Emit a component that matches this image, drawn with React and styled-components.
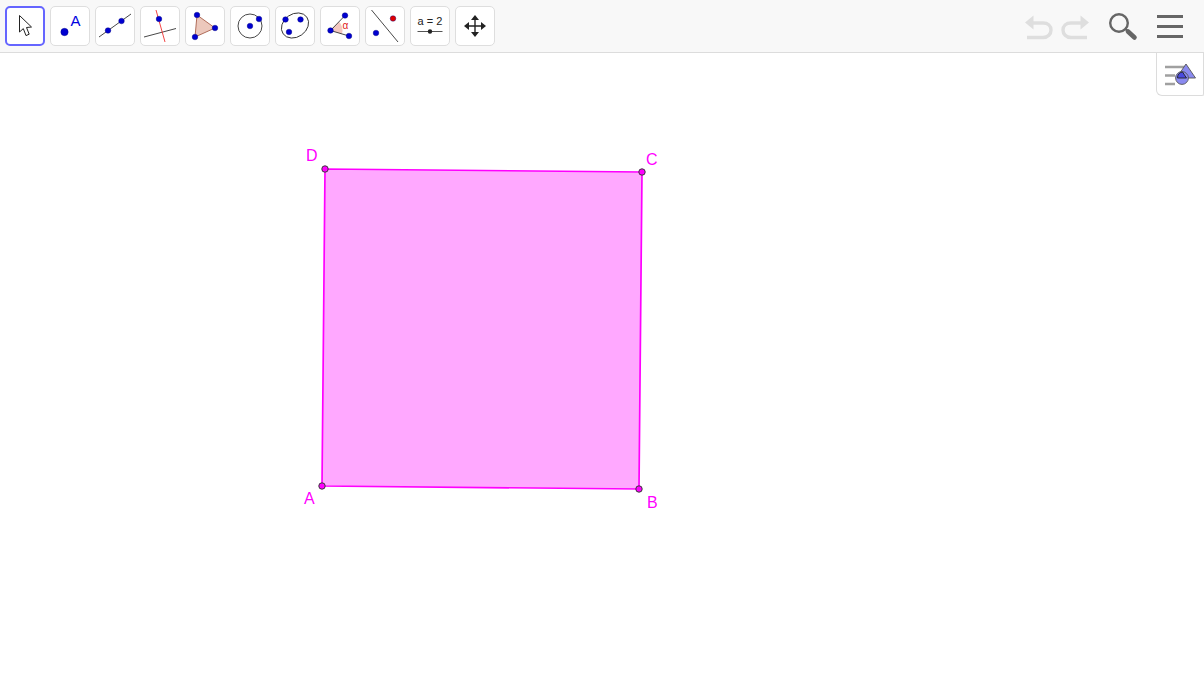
import React from 'react';
import styled, { createGlobalStyle } from 'styled-components';

const BLUE = '#0000d0';

const GlobalStyle = createGlobalStyle`
	html,
	body {
		margin: 0;
		padding: 0;
		height: 100%;
		background: #fff;
		font-family: 'Liberation Sans', Arial, sans-serif;
	}
`;

function Dot({ x, y, r = 2.8, color = BLUE }) {
	return <circle cx={x} cy={y} r={r} fill={color} stroke="#00007a" strokeWidth="0.4" />;
}

function ToolLabel({ x, y, size, color, anchor = 'start', children }) {
	return (
		<text x={x} y={y} fontSize={size} fill={color} textAnchor={anchor} fontFamily="Liberation Sans, Arial, sans-serif">
			{children}
		</text>
	);
}

const tools = [
	{
		name: 'move',
		icon: (
			<path
				d="M14.5 9.5 L14.5 26 L18.3 22.6 L21 29.6 L24.2 28.2 L21.5 21.5 L26.5 21 Z"
				fill="#fff"
				stroke="#222"
				strokeWidth="1"
				strokeLinejoin="round"
			/>
		),
	},
	{
		name: 'point',
		icon: (
			<>
				<Dot x={14.5} y={26} r={3.7} />
				<ToolLabel x={20.5} y={19.5} size={15} color="#0000e0">A</ToolLabel>
			</>
		),
	},
	{
		name: 'line',
		icon: (
			<>
				<line x1="4" y1="31" x2="36" y2="8" stroke="#333" strokeWidth="0.9" />
				<Dot x={13} y={24.5} />
				<Dot x={26.5} y={15} />
			</>
		),
	},
	{
		name: 'perpendicular',
		icon: (
			<>
				<line x1="4" y1="31" x2="36" y2="22.5" stroke="#333" strokeWidth="0.9" />
				<line x1="16" y1="4" x2="25" y2="36" stroke="#f03030" strokeWidth="0.9" />
				<Dot x={19} y={13} />
			</>
		),
	},
	{
		name: 'polygon',
		icon: (
			<>
				<polygon points="12,9 30,22 10,31" fill="#ecc8bc" stroke="#a8604c" strokeWidth="0.9" />
				<Dot x={12} y={9} />
				<Dot x={30} y={22} />
				<Dot x={10} y={31} />
			</>
		),
	},
	{
		name: 'circle',
		icon: (
			<>
				<circle cx="20" cy="20" r="12" fill="none" stroke="#333" strokeWidth="0.9" />
				<Dot x={20} y={20} />
				<Dot x={29} y={13} />
			</>
		),
	},
	{
		name: 'ellipse',
		icon: (
			<>
				<ellipse cx="20" cy="19.5" rx="14.5" ry="11.5" transform="rotate(-35 20 19.5)" fill="none" stroke="#333" strokeWidth="0.9" />
				<Dot x={10.5} y={13.5} />
				<Dot x={25.5} y={13.5} />
				<Dot x={14} y={26} />
			</>
		),
	},
	{
		name: 'angle',
		icon: (
			<>
				<path d="M10.5 24.5 L19 15.8 A12 12 0 0 1 21.8 28 Z" fill="#f4c8c0" />
				<path d="M25 9.5 L10.5 24.5 L29 30" fill="none" stroke="#333" strokeWidth="0.9" />
				<ToolLabel x={22.5} y={23} size={10} color="#e02020">α</ToolLabel>
				<Dot x={10.5} y={24.5} />
				<Dot x={25} y={9.5} />
				<Dot x={29} y={30} />
			</>
		),
	},
	{
		name: 'reflect',
		icon: (
			<>
				<line x1="6.5" y1="4" x2="33" y2="36" stroke="#333" strokeWidth="0.9" />
				<Dot x={11} y={27} />
				<Dot x={28} y={12.5} color="#e00000" />
			</>
		),
	},
	{
		name: 'slider',
		icon: (
			<>
				<ToolLabel x={20} y={19} size={11} color="#222" anchor="middle">a = 2</ToolLabel>
				<line x1="7.5" y1="25.5" x2="32.5" y2="25.5" stroke="#555" strokeWidth="1" />
				<circle cx="20" cy="25.5" r="2.2" fill="#222" />
			</>
		),
	},
	{
		name: 'pan',
		icon: (
			<>
				<path d="M20 11 V29 M11 20 H29" stroke="#222" strokeWidth="1.4" />
				<path d="M20 9 L24 14 H16 Z M20 31 L24 26 H16 Z M9 20 L14 16 V24 Z M31 20 L26 16 V24 Z" fill="#222" />
			</>
		),
	},
];

function App() {
	return (
		<Page>
			<GlobalStyle />
			<Toolbar>
				<ToolGroup>
					{tools.map((tool, index) => (
						<ToolButton key={tool.name} $active={index === 0} type="button" aria-label={tool.name}>
							<svg viewBox="0 0 40 40" width="40" height="40">
								{tool.icon}
							</svg>
						</ToolButton>
					))}
				</ToolGroup>
				<Actions>
					<svg width="30" height="26" viewBox="0 0 30 26">
						<path d="M8 8 H19 C24 8 27 11 27 15 C27 19 24 22.5 19 22.5 H3" fill="none" stroke="#dedede" strokeWidth="3.4" />
						<path d="M1 7.5 L9.5 0.5 V14.5 Z" fill="#dedede" />
					</svg>
					<RedoIcon width="30" height="26" viewBox="0 0 30 26">
						<path d="M8 8 H19 C24 8 27 11 27 15 C27 19 24 22.5 19 22.5 H3" fill="none" stroke="#dedede" strokeWidth="3.4" />
						<path d="M1 7.5 L9.5 0.5 V14.5 Z" fill="#dedede" />
					</RedoIcon>
					<SearchIcon width="32" height="30" viewBox="0 0 32 30">
						<circle cx="12" cy="11" r="8.8" fill="none" stroke="#666" strokeWidth="2.4" />
						<line x1="18.5" y1="17" x2="21" y2="19.5" stroke="#666" strokeWidth="2" />
						<line x1="21" y1="19.5" x2="27.5" y2="25.5" stroke="#666" strokeWidth="4.6" strokeLinecap="round" />
					</SearchIcon>
					<MenuButton type="button" aria-label="menu">
						<span />
						<span />
						<span />
					</MenuButton>
				</Actions>
			</Toolbar>
			<Canvas>
				<StyleToggle type="button" aria-label="style bar">
					<svg width="34" height="26" viewBox="0 0 34 26">
						<path d="M0 6 H20 M0 14.5 H10 M0 23 H10" stroke="#a0a0a0" strokeWidth="2.4" />
						<polygon points="21,3 30.5,17 11.5,17" fill="#8a8af0" stroke="#555" strokeWidth="0.9" />
						<circle cx="17" cy="17" r="6.4" fill="#8a8af0" stroke="#555" strokeWidth="0.9" />
						<path d="M12.5 17 H21.5 L17.5 11 A6 6 0 0 0 12.5 17 Z" fill="#4a4ae0" stroke="#222" strokeWidth="0.9" />
					</svg>
				</StyleToggle>
				<Construction viewBox="0 53 1204 647" width="1204" height="647">
					<polygon
						points="322,486 639,489 642,172 325,169"
						fill="#ffa8ff"
						stroke="#ff00ff"
						strokeWidth="1.7"
					/>
					<Vertex cx="322" cy="486" r="3.2" />
					<Vertex cx="639" cy="489" r="3.2" />
					<Vertex cx="642" cy="172" r="3.2" />
					<Vertex cx="325" cy="169" r="3.2" />
					<VertexLabel x="304" y="504">A</VertexLabel>
					<VertexLabel x="647" y="508">B</VertexLabel>
					<VertexLabel x="646" y="165">C</VertexLabel>
					<VertexLabel x="306" y="161">D</VertexLabel>
				</Construction>
			</Canvas>
		</Page>
	);
}

const Page = styled.div`
	width: 1204px;
	height: 700px;
	display: flex;
	flex-direction: column;
	overflow: hidden;
	background: #fff;
`;

const Toolbar = styled.header`
	flex: none;
	height: 53px;
	display: flex;
	align-items: flex-start;
	justify-content: space-between;
	padding: 6px 0 0 5px;
	box-sizing: border-box;
	background: #f8f8f8;
	border-bottom: 1px solid #dcdcdc;
`;

const ToolGroup = styled.div`
	display: flex;
	gap: 5px;
`;

const ToolButton = styled.button`
	width: 40px;
	height: 40px;
	padding: 0;
	box-sizing: border-box;
	display: flex;
	align-items: center;
	justify-content: center;
	background: #fff;
	border-radius: 5px;
	border: ${(p) => (p.$active ? '2px solid #6565ff' : '1px solid #dedede')};

	svg {
		flex: none;
	}
`;

const Actions = styled.div`
	display: flex;
	align-items: flex-start;
	padding: 9px 21px 0 0;
`;

const RedoIcon = styled.svg`
	margin-left: 6px;
	transform: scaleX(-1);
`;

const SearchIcon = styled.svg`
	margin: -3px 0 0 17px;
`;

const MenuButton = styled.button`
	width: 26px;
	height: 23px;
	margin: 0 0 0 18px;
	padding: 0;
	display: flex;
	flex-direction: column;
	justify-content: space-between;
	background: none;
	border: 0;

	span {
		display: block;
		height: 3px;
		background: #666;
	}
`;

const Canvas = styled.main`
	position: relative;
	flex: 1;
`;

const Construction = styled.svg`
	display: block;
`;

const Vertex = styled.circle`
	fill: #ff00ff;
	stroke: #3a3a3a;
	stroke-width: 1;
`;

const VertexLabel = styled.text`
	font-family: 'Liberation Sans', Arial, sans-serif;
	font-size: 16px;
	fill: #ff00ff;
`;

const StyleToggle = styled.button`
	position: absolute;
	top: 0;
	right: 0;
	width: 48px;
	height: 43px;
	padding: 0 0 0 8px;
	box-sizing: border-box;
	display: flex;
	align-items: center;
	background: #fff;
	border: 1px solid #dcdcdc;
	border-top: 0;
	border-bottom-left-radius: 6px;
	border-bottom-right-radius: 2px;
`;

export default App;
